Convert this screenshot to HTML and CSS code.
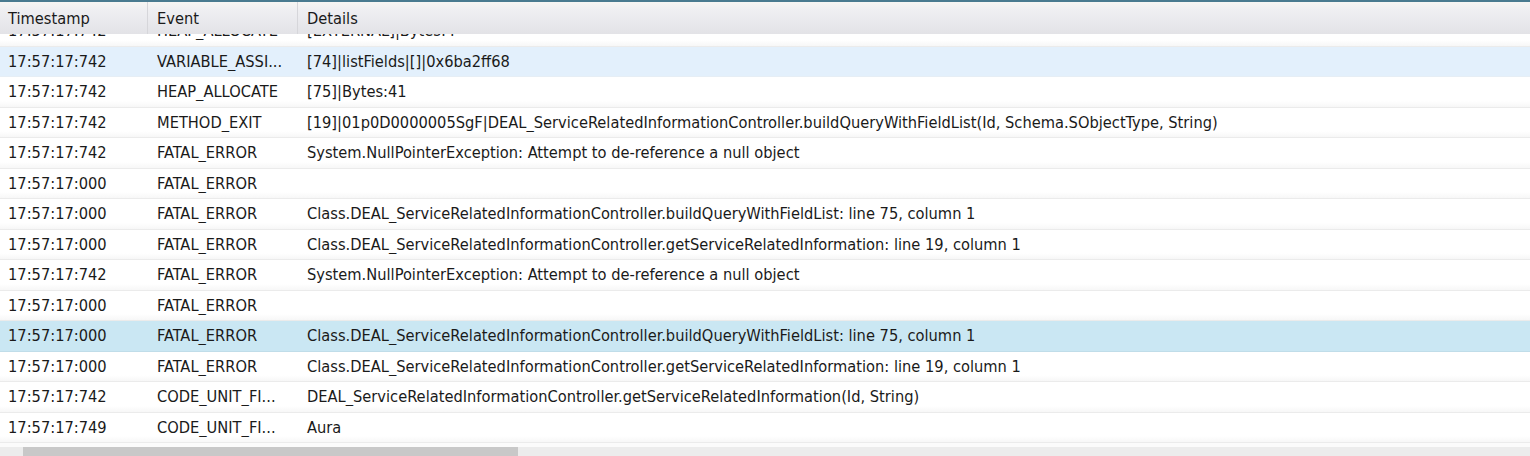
FILE: index.html
```html
<!DOCTYPE html>
<html>
<head>
<meta charset="utf-8">
<link rel="stylesheet" href="styles.css">
</head>
<body>
<div class="grid">
  <div class="head">
    <div class="c c1">Timestamp</div>
    <div class="c c2">Event</div>
    <div class="c c3">Details</div>
  </div>
  <div class="viewport">
    <div class="rows">
      <div class="row"><div class="c c1">17:57:17:742</div><div class="c c2">HEAP_ALLOCATE</div><div class="c c3">[EXTERNAL]|Bytes:4</div></div>
      <div class="row hover"><div class="c c1">17:57:17:742</div><div class="c c2">VARIABLE_ASSI...</div><div class="c c3">[74]|listFields|[]|0x6ba2ff68</div></div>
      <div class="row"><div class="c c1">17:57:17:742</div><div class="c c2">HEAP_ALLOCATE</div><div class="c c3">[75]|Bytes:41</div></div>
      <div class="row"><div class="c c1">17:57:17:742</div><div class="c c2">METHOD_EXIT</div><div class="c c3">[19]|01p0D0000005SgF|DEAL_ServiceRelatedInformationController.buildQueryWithFieldList(Id, Schema.SObjectType, String)</div></div>
      <div class="row"><div class="c c1">17:57:17:742</div><div class="c c2">FATAL_ERROR</div><div class="c c3">System.NullPointerException: Attempt to de-reference a null object</div></div>
      <div class="row"><div class="c c1">17:57:17:000</div><div class="c c2">FATAL_ERROR</div><div class="c c3"></div></div>
      <div class="row"><div class="c c1">17:57:17:000</div><div class="c c2">FATAL_ERROR</div><div class="c c3">Class.DEAL_ServiceRelatedInformationController.buildQueryWithFieldList: line 75, column 1</div></div>
      <div class="row"><div class="c c1">17:57:17:000</div><div class="c c2">FATAL_ERROR</div><div class="c c3">Class.DEAL_ServiceRelatedInformationController.getServiceRelatedInformation: line 19, column 1</div></div>
      <div class="row"><div class="c c1">17:57:17:742</div><div class="c c2">FATAL_ERROR</div><div class="c c3">System.NullPointerException: Attempt to de-reference a null object</div></div>
      <div class="row"><div class="c c1">17:57:17:000</div><div class="c c2">FATAL_ERROR</div><div class="c c3"></div></div>
      <div class="row selected"><div class="c c1">17:57:17:000</div><div class="c c2">FATAL_ERROR</div><div class="c c3">Class.DEAL_ServiceRelatedInformationController.buildQueryWithFieldList: line 75, column 1</div></div>
      <div class="row"><div class="c c1">17:57:17:000</div><div class="c c2">FATAL_ERROR</div><div class="c c3">Class.DEAL_ServiceRelatedInformationController.getServiceRelatedInformation: line 19, column 1</div></div>
      <div class="row"><div class="c c1">17:57:17:742</div><div class="c c2">CODE_UNIT_FI...</div><div class="c c3">DEAL_ServiceRelatedInformationController.getServiceRelatedInformation(Id, String)</div></div>
      <div class="row"><div class="c c1">17:57:17:749</div><div class="c c2">CODE_UNIT_FI...</div><div class="c c3">Aura</div></div>
    </div>
  </div>
  <div class="hscroll"><div class="thumb"></div></div>
</div>
</body>
</html>
```
FILE: styles.css
```css
html, body {
  margin: 0;
  padding: 0;
  background: #ffffff;
}
body {
  font-family: "DejaVu Sans Condensed", "Liberation Sans", sans-serif;
  font-stretch: condensed;
  font-size: 16.3px;
  color: #1a1a1a;
  width: 1530px;
  height: 456px;
  overflow: hidden;
}
.grid {
  display: flex;
  flex-direction: column;
  height: 456px;
}
.head {
  display: flex;
  height: 32px;
  border-top: 2px solid #4a7b90;
  background: linear-gradient(#f7f6f3 0%, #efeff2 25%, #e3e3e7 100%);
  flex: none;
}
.head .c {
  display: flex;
  align-items: center;
  border-right: 1px solid #d6d6da;
}
.c {
  box-sizing: border-box;
  white-space: nowrap;
  overflow: hidden;
}
.c1 { width: 148px; padding-left: 8px; }
.c2 { width: 150px; padding-left: 9px; }
.c3 { flex: 1; padding-left: 9px; }
.head .c3 { border-right: none; }
.viewport {
  height: 409px;
  overflow: hidden;
  flex: none;
}
.rows {
  margin-top: -18px;
}
.row {
  display: flex;
  align-items: center;
  height: 30.5px;
  box-sizing: border-box;
  border-bottom: 1px solid #ebebeb;
  background: linear-gradient(#ffffff 80%, #f7f7f7 100%);
}
.row.hover {
  background: #e3f0fc;
  border-bottom-color: #e6eef5;
}
.row.selected {
  background: #cae7f3;
  border-bottom-color: #c0dde9;
}
.hscroll {
  flex: none;
  height: 13px;
  display: flex;
  align-items: flex-end;
  background: linear-gradient(#fbfbfb 0%, #fbfbfb 30%, #ececec 31%);
}
.thumb {
  margin-left: 23px;
  width: 495px;
  height: 9px;
  background: #c8c8c8;
}
```
